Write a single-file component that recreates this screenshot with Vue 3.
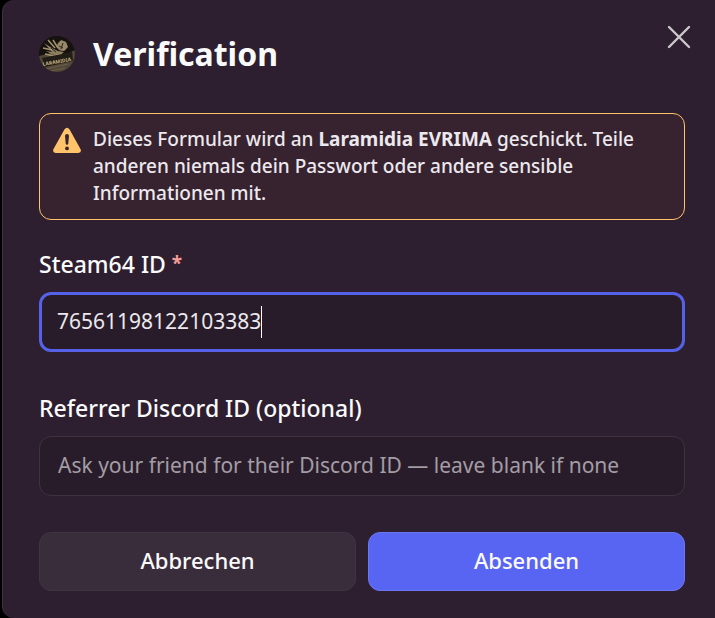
<template>
  <main class="backdrop">
    <form class="modal" role="dialog" aria-labelledby="modal-title" @submit.prevent="submit">
      <header class="modal-header">
        <svg class="avatar" viewBox="0 0 36 36" aria-hidden="true">
          <defs>
            <clipPath id="avatar-clip"><circle cx="18" cy="18" r="18" /></clipPath>
          </defs>
          <g clip-path="url(#avatar-clip)">
            <rect width="36" height="36" fill="#15120f" />
            <path d="M0 20L12 17L24 20L36 14V36H0Z" fill="#51483a" />
            <circle cx="23" cy="10" r="5" fill="#85765a" />
            <path d="M19 8L22 4L27 6L29 11L25 15L20 13Z" fill="#9a8968" />
            <path d="M5 7L13 12L19 15L25 16L20 20L12 18L7 15L13 16Z" fill="#8d7d5f" />
            <path d="M9 4L16 12M14 4L19 12M4 12L13 14M6 18L15 20L23 18" stroke="#a3936f" stroke-width="1.5" fill="none" />
            <path d="M12 12L17 16M20 10L24 12M24 7L22 13" stroke="#2c261c" stroke-width="1" />
            <path d="M3 22L33 16L34 25L6 31Z" fill="#211c14" />
            <text x="4" y="30" transform="rotate(-10 4 30)" class="avatar-text">LARAMIDIA</text>
            <path d="M7 33L29 28M12 35L26 32" stroke="#6d6049" stroke-width="1" />
          </g>
        </svg>
        <h1 id="modal-title" class="modal-title">Verification</h1>
        <button type="button" class="close-button" aria-label="Schließen" @click="close">
          <svg viewBox="0 0 24 24" width="24" height="24" aria-hidden="true">
            <path d="M2 2L22 22M22 2L2 22" stroke="#cbc7cd" stroke-width="2.4" stroke-linecap="round" />
          </svg>
        </button>
      </header>

      <div class="notice">
        <svg class="notice-icon" viewBox="0 0 28 28" aria-hidden="true">
          <path d="M11.4 3.4Q14 0.2 16.6 3.4L27.6 23.2Q28.8 26.8 25.4 27H2.6Q-0.8 26.8 0.4 23.2Z" fill="#ffc46b" />
          <path d="M12 9.8Q12 8 14 8Q16 8 16 9.8L15.3 17.4Q15.1 18.8 14 18.8Q12.9 18.8 12.7 17.4Z" fill="#38242f" />
          <circle cx="14" cy="22.4" r="1.9" fill="#38242f" />
        </svg>
        <p class="notice-text">
          Dieses Formular wird an <strong>Laramidia EVRIMA</strong> geschickt. Teile anderen niemals dein Passwort oder andere sensible Informationen mit.
        </p>
      </div>

      <div class="field">
        <label class="field-label" for="steam-id">Steam64 ID <span class="required">*</span></label>
        <div class="field-box active">
          <input id="steam-id" v-model="form.steamId" class="field-input fit" type="text" required />
          <span class="caret"></span>
        </div>
      </div>

      <div class="field">
        <label class="field-label" for="referrer-id">Referrer Discord ID (optional)</label>
        <div class="field-box">
          <input
            id="referrer-id"
            v-model="form.referrerId"
            class="field-input"
            type="text"
            placeholder="Ask your friend for their Discord ID — leave blank if none"
          />
        </div>
      </div>

      <footer class="modal-footer">
        <button type="button" class="button secondary" @click="close">Abbrechen</button>
        <button type="submit" class="button primary">Absenden</button>
      </footer>
    </form>
  </main>
</template>

<script setup>
import { ref } from 'vue'

const emit = defineEmits(['submit', 'close'])

const form = ref({
  steamId: '76561198122103383',
  referrerId: '',
})

const submit = () => {
  emit('submit', form.value)
}

const close = () => {
  emit('close')
}
</script>

<style>
body {
  margin: 0;
  background-color: #000;
}
</style>

<style scoped>
.backdrop {
  box-sizing: border-box;
  min-height: 100vh;
  padding-left: 2px;
  overflow: hidden;
  background-color: #000;
  font-family: "Noto Sans", "Open Sans", sans-serif;
  color: #fbfafb;
}

.modal {
  box-sizing: border-box;
  padding: 24px 30px 27px 36px;
  border-left: 1px solid #3e303f;
  border-radius: 12px 0 0 12px;
  background-color: #2d1f2f;
}

.modal-header {
  display: flex;
  align-items: center;
  gap: 18px;
  height: 60px;
  margin-bottom: 29px;
}

.avatar {
  width: 36px;
  height: 36px;
}

.avatar-text {
  font-size: 5px;
  font-weight: 700;
  fill: #c3b184;
}

.modal-title {
  flex: 1;
  margin: 0;
  font-size: 32px;
  font-weight: 700;
  line-height: 40px;
}

.close-button {
  align-self: flex-start;
  display: flex;
  padding: 6px;
  margin: -5px -12px 0 0;
  border: 0;
  background: none;
  cursor: pointer;
}

.notice {
  display: flex;
  gap: 12px;
  padding: 12px 13px;
  border: 1px solid #ffc46b;
  border-radius: 12px;
  background-color: #36232f;
}

.notice-icon {
  flex: none;
  width: 28px;
  height: 28px;
}

.notice-text {
  margin: 0;
  font-size: 19px;
  font-weight: 500;
  line-height: 27px;
  color: #ece8ed;
}

.notice-text strong {
  font-weight: 700;
}

.field {
  margin-top: 29px;
}

.field + .field {
  margin-top: 41px;
}

.field-label {
  display: block;
  margin-bottom: 13px;
  font-size: 23px;
  font-weight: 500;
  line-height: 30px;
}

.required {
  font-size: 19px;
  font-weight: 700;
  line-height: 1;
  vertical-align: 3px;
  color: #f79a98;
}

.field-box {
  box-sizing: border-box;
  display: flex;
  align-items: center;
  height: 60px;
  padding: 0 18px;
  border: 1px solid #3f3140;
  border-radius: 12px;
  background-color: #291c2a;
}

.field-box.active {
  padding: 0 15px;
  border: 3px solid #5561e6;
}

.field-input {
  flex: 1;
  min-width: 0;
  padding: 0 0 2px;
  border: 0;
  outline: none;
  background: none;
  font-family: inherit;
  font-size: 21px;
  line-height: 32px;
  color: #ece8ed;
}

.field-input.fit {
  flex: none;
  field-sizing: content;
  caret-color: transparent;
}

.field-input::placeholder {
  color: #a39da5;
  opacity: 1;
}

.caret {
  width: 1px;
  height: 32px;
  background-color: #fff;
}

.modal-footer {
  display: flex;
  gap: 12px;
  margin-top: 36px;
}

.button {
  flex: 1;
  height: 59px;
  padding: 0 0 3px;
  border: 1px solid #413442;
  border-radius: 12px;
  background-color: #3a2d3b;
  font-family: inherit;
  font-size: 22px;
  font-weight: 500;
  color: #fbfafb;
  cursor: pointer;
}

.button.primary {
  border-color: #6b76f5;
  background-color: #5865f2;
}
</style>
